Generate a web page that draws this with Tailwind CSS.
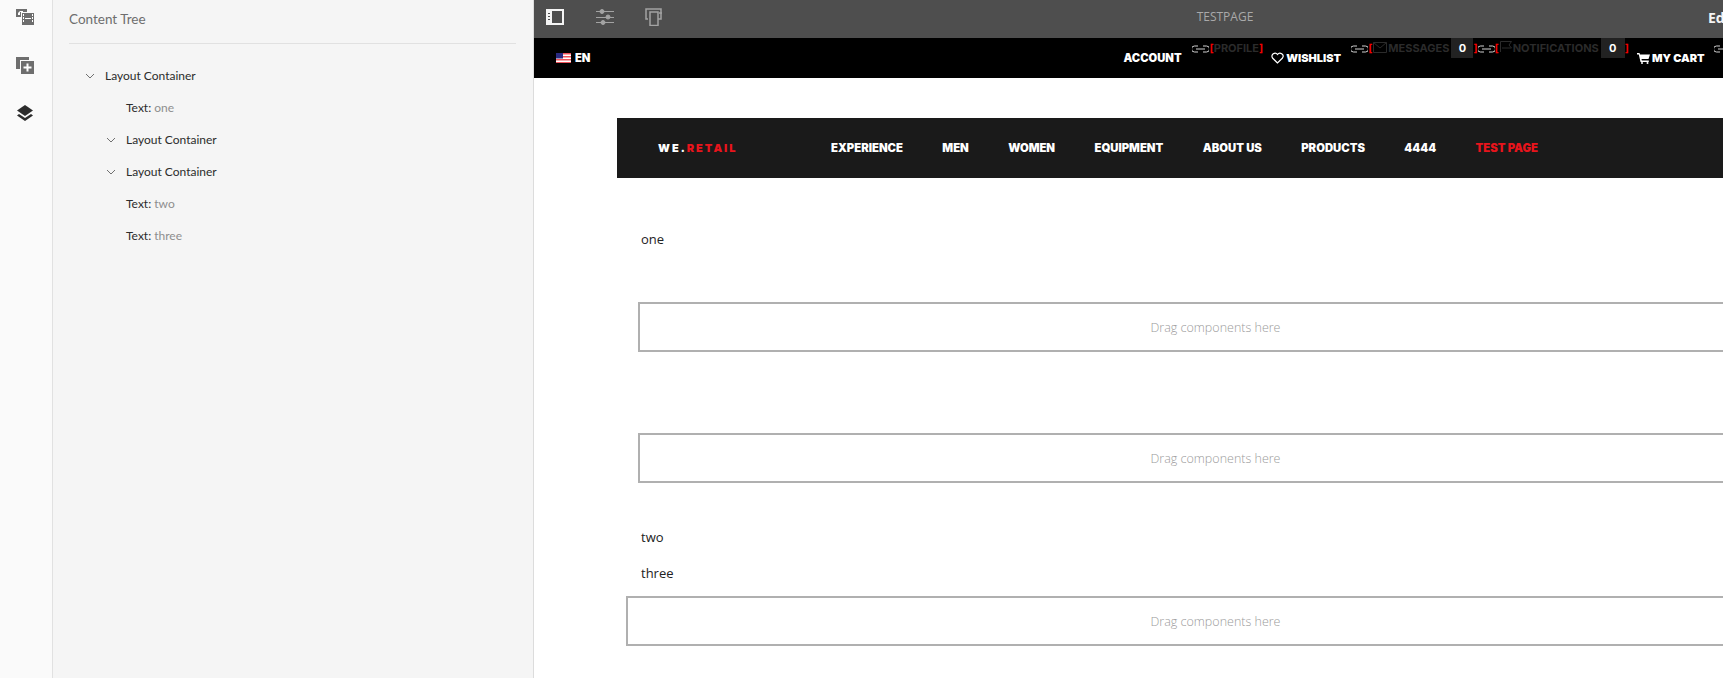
<!DOCTYPE html>
<html lang="en">
<head>
<meta charset="utf-8">
<title>Content Tree</title>
<script src="https://cdn.jsdelivr.net/npm/@tailwindcss/browser@4"></script>
</head>
<body class="m-0 bg-white font-['Lato','Noto_Sans',sans-serif]">
<div class="flex h-[678px] w-[1723px] overflow-hidden">
  <!-- rail -->
  <aside class="flex w-[53px] shrink-0 flex-col items-center border-r border-[#e1e1e1] bg-[#fafafa] pt-[8px] pr-[3px]">
    <svg class="h-[18px] w-[18px]" viewBox="0 0 18 18" aria-hidden="true"><path fill="#6e6e6e" d="M0 1h11v3H5v5H0z"/><path fill="#fff" d="M2 5l2-2h3v1H4v3H2z"/><path fill="#6e6e6e" d="M6 5h12v12H6z"/><path fill="#fff" d="M7 6h1v2H7zm0 3h1v2H7zm0 3h1v2H7zm9-6h1v2h-1zm0 3h1v2h-1zm0 3h1v2h-1zM9 10h6v1H9z"/></svg>
    <svg class="mt-[30px] h-[18px] w-[18px]" viewBox="0 0 18 18" aria-hidden="true"><path fill="#6e6e6e" d="M0 1h13v3H4v9H0z"/><path fill="#6e6e6e" d="M5 5h13v13H5z"/><path fill="#fff" d="M10.500 7.500h2v3h3v2h-3v3h-2v-3h-3v-2h3z"/></svg>
    <svg class="mt-[30px] h-[18px] w-[18px]" viewBox="0 0 18 18" aria-hidden="true"><path fill="#2c2c2c" d="M9 1l8 5.500L9 12 1 6.500z"/><path fill="#2c2c2c" d="M3 10l6 4 6-4 2 1.500L9 17l-8-5.500z"/></svg>
  </aside>
  <!-- panel -->
  <section class="w-[481px] shrink-0 border-r border-[#dcdcdc] bg-[#f5f5f5] pl-[16px] pr-[17px]">
    <h1 class="flex h-[43px] items-center pb-[4px] text-[13.500px] font-normal text-[#6e6e6e]">Content Tree</h1>
    <div class="border-t border-[#e1e1e1] pt-[16px] text-[12px] text-[#2c2c2c]">
      <div class="flex h-[32px] items-center pl-[16px]"><svg class="mr-[10px] h-[8px] w-[10px]" viewBox="0 0 10 8" fill="none" stroke="#707070" aria-hidden="true"><path d="M1 2l4 4 4-4"/></svg>Layout Container</div>
      <div class="flex h-[32px] items-center pl-[57px]">Text:&nbsp;<span class="text-[#8e8e8e]">one</span></div>
      <div class="flex h-[32px] items-center pl-[37px]"><svg class="mr-[10px] h-[8px] w-[10px]" viewBox="0 0 10 8" fill="none" stroke="#707070" aria-hidden="true"><path d="M1 2l4 4 4-4"/></svg>Layout Container</div>
      <div class="flex h-[32px] items-center pl-[37px]"><svg class="mr-[10px] h-[8px] w-[10px]" viewBox="0 0 10 8" fill="none" stroke="#707070" aria-hidden="true"><path d="M1 2l4 4 4-4"/></svg>Layout Container</div>
      <div class="flex h-[32px] items-center pl-[57px]">Text:&nbsp;<span class="text-[#8e8e8e]">two</span></div>
      <div class="flex h-[32px] items-center pl-[57px]">Text:&nbsp;<span class="text-[#8e8e8e]">three</span></div>
    </div>
  </section>
  <!-- main -->
  <main class="min-w-0 flex-1 overflow-hidden">
    <!-- editor toolbar -->
    <div class="flex h-[38px] w-[1189px] items-center bg-[#4e4e4e] pb-[4px]">
      <svg class="ml-[12px] h-[18px] w-[18px] shrink-0" viewBox="0 0 18 18" aria-hidden="true"><path fill="#f4f4f4" d="M0 1h18v16H0z"/><path fill="#4e4e4e" d="M6 3h10v12H6zM2 5h2v1H2zm0 3h2v1H2zm0 3h2v1H2z"/></svg>
      <svg class="ml-[31px] h-[18px] w-[20px] shrink-0" viewBox="0 0 20 18" aria-hidden="true"><g stroke="#a3a3a3" fill="#a3a3a3"><path d="M1 3.500h18M1 9.500h18M1 14.500h18"/><circle cx="7" cy="3.500" r="2"/><circle cx="13" cy="9" r="2"/><circle cx="8" cy="14.500" r="2"/></g></svg>
      <svg class="ml-[30px] h-[18px] w-[18px] shrink-0" viewBox="0 0 18 18" fill="none" stroke="#a3a3a3" stroke-width="1.500" aria-hidden="true"><path d="M3 11H1V1h15v10h-3"/><rect x="5" y="4" width="8" height="13.500" fill="#4e4e4e"/><path d="M14 5h3"/></svg>
      <span class="ml-[527px] w-[70px] shrink-0 text-center font-['Open_Sans',sans-serif] text-[12px] text-[#a9a9a9]">TESTPAGE</span>
      <span class="ml-[448px] shrink-0 font-['Open_Sans',sans-serif] text-[14px] font-bold text-[#f4f4f4]">Edit</span>
    </div>
    <!-- utility bar -->
    <div class="flex h-[40px] w-[1260px] whitespace-nowrap bg-black font-['Inter',sans-serif] text-[11.200px] font-black text-white">
      <div class="ml-[22px] flex h-full shrink-0 items-center">
        <svg class="h-[10px] w-[15px]" viewBox="0 0 15 10" aria-hidden="true"><path fill="#fff" d="M0 0h15v10H0z"/><path fill="#f0525a" d="M0 0h15v1.500H0zm0 3h15v1.500H0zm0 3h15v1.500H0zm0 3h15v1H0z"/><path fill="#2a2a80" d="M0 0h7v5.500H0z"/></svg>
        <span class="ml-[4px]">EN</span>
      </div>
      <div class="ml-[533px] flex h-full shrink-0 items-center"><span>ACCOUNT</span></div>
      <div class="ml-[10px] flex shrink-0 items-start pt-[2px] text-[11px] font-bold text-[#2b2b2b]">
        <svg class="mt-[5px] h-[8px] w-[17px] shrink-0" viewBox="0 0 17 8" fill="none" stroke="#d0d0d0" aria-hidden="true"><path d="M6 1H2.500a3 3 0 000 6H6M11 1h3.500a3 3 0 010 6H11M4 4h9"/></svg>
        <span class="ml-[1px] text-[#f00000]">[</span><span>PROFILE</span><span class="text-[#f00000]">]</span>
      </div>
      <div class="ml-[8px] flex h-full shrink-0 items-center">
        <svg class="h-[12px] w-[13px]" viewBox="0 0 13 12" fill="none" stroke="#fff" stroke-width="1.200" aria-hidden="true"><path d="M6.500 11L1.500 6A3 3 0 016.500 2.500 3 3 0 0111.500 6z"/></svg>
        <span class="ml-[2px] text-[11px]">WISHLIST</span>
      </div>
      <div class="ml-[10px] flex shrink-0 items-start pt-[2px] text-[11px] font-bold text-[#2b2b2b]">
        <svg class="mt-[5px] h-[8px] w-[17px] shrink-0" viewBox="0 0 17 8" fill="none" stroke="#d0d0d0" aria-hidden="true"><path d="M6 1H2.500a3 3 0 000 6H6M11 1h3.500a3 3 0 010 6H11M4 4h9"/></svg>
        <span class="text-[#f00000]">[</span>
        <svg class="ml-[1px] mt-[2px] h-[11px] w-[14px] shrink-0" viewBox="0 0 14 11" fill="none" stroke="#2b2b2b" aria-hidden="true"><path d="M.5.500h13v10H.500zM.5.500L7 6l6.500-5.500"/></svg>
        <span class="ml-[1px]">MESSAGES</span>
        <span class="-mt-[2px] ml-[2px] flex h-[20px] w-[22px] shrink-0 items-center justify-center bg-[#222] text-white">0</span>
        <span class="text-[#f00000]">]</span>
      </div>
      <div class="flex shrink-0 items-start pt-[2px] text-[11px] font-bold text-[#2b2b2b]">
        <svg class="mt-[5px] h-[8px] w-[17px] shrink-0" viewBox="0 0 17 8" fill="none" stroke="#d0d0d0" aria-hidden="true"><path d="M6 1H2.500a3 3 0 000 6H6M11 1h3.500a3 3 0 010 6H11M4 4h9"/></svg>
        <span class="text-[#f00000]">[</span>
        <svg class="ml-[1px] mt-[1px] h-[11px] w-[12px] shrink-0" viewBox="0 0 12 11" fill="none" stroke="#2b2b2b" aria-hidden="true"><path d="M.5 11V.500h11L9 4l2.500 3H2"/></svg>
        <span class="ml-[1px]">NOTIFICATIONS</span>
        <span class="-mt-[2px] ml-[2px] flex h-[20px] w-[24px] shrink-0 items-center justify-center bg-[#222] text-white">0</span>
        <span class="text-[#f00000]">]</span>
      </div>
      <div class="ml-[8px] flex h-full shrink-0 items-center">
        <svg class="h-[12px] w-[13px]" viewBox="0 0 13 12" aria-hidden="true"><path fill="#fff" d="M0 1h2.500l.5 1.500h10L11.500 7H4.500l.3 1.500h7V10H3.500L1.800 2.500H0z"/><circle fill="#fff" cx="5" cy="11" r="1"/><circle fill="#fff" cx="10.500" cy="11" r="1"/></svg>
        <span class="ml-[2px] text-[11px]">MY CART</span>
      </div>
      <div class="ml-[9px] shrink-0 pt-[7px]">
        <svg class="h-[8px] w-[17px] shrink-0" viewBox="0 0 17 8" fill="none" stroke="#d0d0d0" aria-hidden="true"><path d="M6 1H2.500a3 3 0 000 6H6M11 1h3.500a3 3 0 010 6H11M4 4h9"/></svg>
      </div>
    </div>
    <!-- page -->
    <div class="w-[1300px] pt-[40px] font-['Open_Sans',sans-serif]">
      <nav class="ml-[83px] flex h-[60px] items-center bg-[#1a1a1a] pl-[41px] font-['Inter',sans-serif] text-[11.300px] font-black text-white">
        <span class="w-[173px] shrink-0 text-[11px] tracking-[2px]">WE.<span class="text-[#e8141c]">RETAIL</span></span>
        <div class="flex gap-[39.400px]">
          <span>EXPERIENCE</span><span>MEN</span><span>WOMEN</span><span>EQUIPMENT</span><span>ABOUT US</span><span>PRODUCTS</span><span>4444</span><span class="text-[#e8141c]">TEST PAGE</span>
        </div>
      </nav>
      <p class="ml-[107px] mt-[51px] h-[20px] text-[13px] leading-[20px] text-[#222]">one</p>
      <div class="ml-[104px] mt-[53px] flex h-[50px] w-[1155px] items-center justify-center border-2 border-[#b0b0b0] pt-[2px] text-[12.500px] font-light text-[#9b9b9b]">Drag components here</div>
      <div class="ml-[104px] mt-[81px] flex h-[50px] w-[1155px] items-center justify-center border-2 border-[#b0b0b0] pt-[2px] text-[12.500px] font-light text-[#9b9b9b]">Drag components here</div>
      <p class="ml-[107px] mt-[44px] h-[20px] text-[13px] leading-[20px] text-[#222]">two</p>
      <p class="ml-[107px] mt-[16px] h-[20px] text-[13px] leading-[20px] text-[#222]">three</p>
      <div class="ml-[92px] mt-[13px] flex h-[50px] w-[1179px] items-center justify-center border-2 border-[#b0b0b0] pt-[2px] text-[12.500px] font-light text-[#9b9b9b]">Drag components here</div>
    </div>
  </main>
</div>
</body>
</html>
